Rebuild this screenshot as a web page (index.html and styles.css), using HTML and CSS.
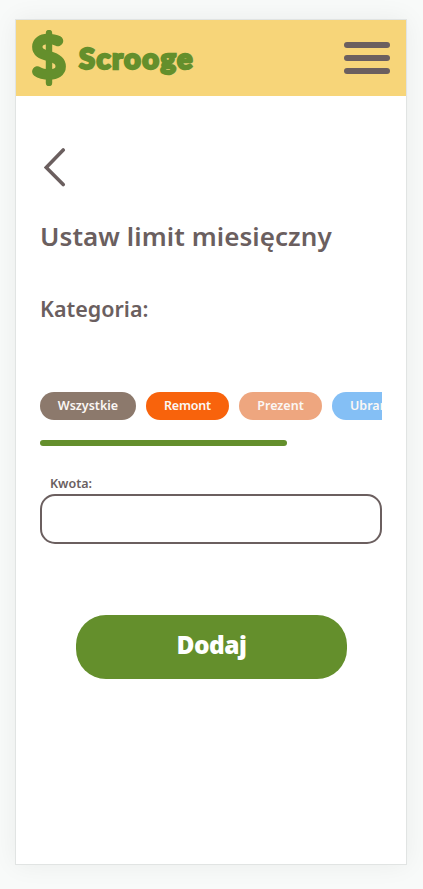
FILE: index.html
```html
<!DOCTYPE html>
<html lang="pl">
<head>
<meta charset="utf-8">
<meta name="viewport" content="width=device-width, initial-scale=1">
<title>Scrooge</title>
<link rel="stylesheet" href="styles.css">
</head>
<body>
<div class="card">
  <header class="header">
    <div class="brand">
      <svg class="logo" width="34" height="56" viewBox="0 0 34 56" fill="none" stroke="#648f2c" stroke-linecap="round" stroke-linejoin="round">
        <path d="M17 3V53" stroke-width="6.4"/>
        <path d="M26 11C23 9.500 19 9 15.500 9C9.500 9 5.300 12 5.300 16.800C5.300 22 9 24 16.500 26C25 28.200 28.700 31 28.700 36.500C28.700 41.500 24 44.500 17.500 44.500C12 44.500 8 43.500 5.300 41.500" stroke-width="10.4"/>
      </svg>
      <span class="brand-name">Scrooge</span>
    </div>
    <button class="menu" aria-label="Menu"><i></i><i></i><i></i></button>
  </header>
  <main class="content">
    <a class="back" href="#" aria-label="Wstecz">
      <svg width="22" height="40" viewBox="0 0 22 40" fill="none" stroke="#6b5f5f" stroke-width="3.6" stroke-linecap="round"><path d="M19.200 3L2.200 20.500L19.200 37.500"/></svg>
    </a>
    <h1 class="title">Ustaw limit miesięczny</h1>
    <h2 class="subtitle">Kategoria:</h2>
    <div class="chips">
      <span class="chip chip-all">Wszystkie</span>
      <span class="chip chip-repair">Remont</span>
      <span class="chip chip-gift">Prezent</span>
      <span class="chip chip-clothes">Ubrania</span>
    </div>
    <div class="scrollbar"></div>
    <label class="label" for="amount">Kwota:</label>
    <input class="input" id="amount" type="text">
    <button class="submit">Dodaj</button>
  </main>
</div>
</body>
</html>
```
FILE: styles.css
```css
* { box-sizing: border-box; }
body {
  margin: 0;
  height: 889px;
  padding: 19px 16px 24px 15px;
  background: #f8faf9;
  font-family: "Noto Sans", sans-serif;
  color: #6b5f5f;
  overflow: hidden;
}
.card {
  height: 846px;
  background: #fff;
  border: 1px solid #e1e4e3;
  box-shadow: 0 0 24px rgba(0, 0, 0, 0.06);
}
.header {
  height: 76px;
  padding: 0 16px;
  display: flex;
  align-items: center;
  justify-content: space-between;
  background: #f7d579;
}
.brand { display: flex; align-items: center; gap: 13px; }
.logo { display: block; }
.brand-name {
  color: #648f2c;
  font: 900 29px/40px Lato, sans-serif;
  letter-spacing: 1.500px;
  -webkit-text-stroke: 2.400px #648f2c;
  stroke-linejoin: round;
}
.menu {
  display: grid;
  gap: 7px;
  width: 46px;
  padding: 0;
  border: 0;
  background: none;
}
.menu i { height: 6px; border-radius: 3px; background: #6b5f5f; }
.content { padding: 51px 24px 0; display: flex; flex-direction: column; }
.back { width: 22px; height: 40px; margin-left: 4px; }
.back svg { display: block; }
.title {
  margin: 29px 0 0;
  font-size: 26px;
  line-height: 40px;
  font-weight: 600;
  letter-spacing: 0.080px;
  white-space: nowrap;
}
.subtitle {
  margin: 36px 0 0;
  font-size: 21.500px;
  line-height: 33px;
  font-weight: 600;
}
.chips { display: flex; gap: 10px; margin-top: 67px; overflow: hidden; }
.chip {
  flex: none;
  height: 28px;
  border-radius: 14px;
  font-size: 12.500px;
  line-height: 28px;
  font-weight: 600;
  text-align: center;
  white-space: nowrap;
  color: #fbf7f4;
}
.chip-all { width: 96px; background: #8c796c; }
.chip-repair { width: 83px; background: #f8630c; letter-spacing: -0.200px; }
.chip-gift { width: 83px; background: #eea67f; }
.chip-clothes { width: 83px; padding-left: 18px; text-align: left; background: #84bff5; }
.scrollbar { width: 247px; height: 6px; margin-top: 20px; border-radius: 3px; background: #648f2c; }
.label {
  margin: 28px 0 0 10px;
  font-size: 12.500px;
  line-height: 20px;
  font-weight: 600;
}
.input {
  width: 342px;
  height: 50px;
  padding: 0 12px;
  border: 2px solid #6b5f5f;
  border-radius: 15px;
  background: #fff;
  font: inherit;
}
.submit {
  width: 271px;
  height: 64px;
  margin: 71px 0 0 36px;
  padding: 0 0 5px;
  border: 0;
  border-radius: 30px;
  background: #648f2c;
  color: #fff;
  font: 900 24.500px/36px "Noto Sans", sans-serif;
  letter-spacing: -0.500px;
}
```
